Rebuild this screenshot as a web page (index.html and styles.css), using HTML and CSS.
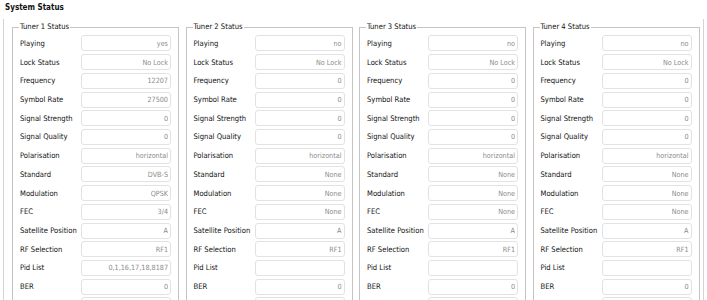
FILE: index.html
```html
<!DOCTYPE HTML>
<html>
	<head>
		<title>System Status</title>
		<meta name="viewport" content="width=device-width, initial-scale=1.0">
		<link rel="stylesheet" href="styles.css">
	</head>
	<body>
	<h1>System Status</h1>
	<div id="status-area">
		<fieldset class="tuner">
			<legend>Tuner 1 Status</legend>
			<label>Playing</label><input type="text" readonly value="yes">
			<label>Lock Status</label><input type="text" readonly value="No Lock">
			<label>Frequency</label><input type="text" readonly value="12207">
			<label>Symbol Rate</label><input type="text" readonly value="27500">
			<label>Signal Strength</label><input type="text" readonly value="0">
			<label>Signal Quality</label><input type="text" readonly value="0">
			<label>Polarisation</label><input type="text" readonly value="horizontal">
			<label>Standard</label><input type="text" readonly value="DVB-S">
			<label>Modulation</label><input type="text" readonly value="QPSK">
			<label>FEC</label><input type="text" readonly value="3/4">
			<label>Satellite Position</label><input type="text" readonly value="A">
			<label>RF Selection</label><input type="text" readonly value="RF1">
			<label>Pid List</label><input type="text" readonly value="0,1,16,17,18,8187">
			<label>BER</label><input type="text" readonly value="0">
			<label></label><input type="text" readonly value="">
		</fieldset>
		<fieldset class="tuner">
			<legend>Tuner 2 Status</legend>
			<label>Playing</label><input type="text" readonly value="no">
			<label>Lock Status</label><input type="text" readonly value="No Lock">
			<label>Frequency</label><input type="text" readonly value="0">
			<label>Symbol Rate</label><input type="text" readonly value="0">
			<label>Signal Strength</label><input type="text" readonly value="0">
			<label>Signal Quality</label><input type="text" readonly value="0">
			<label>Polarisation</label><input type="text" readonly value="horizontal">
			<label>Standard</label><input type="text" readonly value="None">
			<label>Modulation</label><input type="text" readonly value="None">
			<label>FEC</label><input type="text" readonly value="None">
			<label>Satellite Position</label><input type="text" readonly value="A">
			<label>RF Selection</label><input type="text" readonly value="RF1">
			<label>Pid List</label><input type="text" readonly value="">
			<label>BER</label><input type="text" readonly value="0">
			<label></label><input type="text" readonly value="">
		</fieldset>
		<fieldset class="tuner">
			<legend>Tuner 3 Status</legend>
			<label>Playing</label><input type="text" readonly value="no">
			<label>Lock Status</label><input type="text" readonly value="No Lock">
			<label>Frequency</label><input type="text" readonly value="0">
			<label>Symbol Rate</label><input type="text" readonly value="0">
			<label>Signal Strength</label><input type="text" readonly value="0">
			<label>Signal Quality</label><input type="text" readonly value="0">
			<label>Polarisation</label><input type="text" readonly value="horizontal">
			<label>Standard</label><input type="text" readonly value="None">
			<label>Modulation</label><input type="text" readonly value="None">
			<label>FEC</label><input type="text" readonly value="None">
			<label>Satellite Position</label><input type="text" readonly value="A">
			<label>RF Selection</label><input type="text" readonly value="RF1">
			<label>Pid List</label><input type="text" readonly value="">
			<label>BER</label><input type="text" readonly value="0">
			<label></label><input type="text" readonly value="">
		</fieldset>
		<fieldset class="tuner">
			<legend>Tuner 4 Status</legend>
			<label>Playing</label><input type="text" readonly value="no">
			<label>Lock Status</label><input type="text" readonly value="No Lock">
			<label>Frequency</label><input type="text" readonly value="0">
			<label>Symbol Rate</label><input type="text" readonly value="0">
			<label>Signal Strength</label><input type="text" readonly value="0">
			<label>Signal Quality</label><input type="text" readonly value="0">
			<label>Polarisation</label><input type="text" readonly value="horizontal">
			<label>Standard</label><input type="text" readonly value="None">
			<label>Modulation</label><input type="text" readonly value="None">
			<label>FEC</label><input type="text" readonly value="None">
			<label>Satellite Position</label><input type="text" readonly value="A">
			<label>RF Selection</label><input type="text" readonly value="RF1">
			<label>Pid List</label><input type="text" readonly value="">
			<label>BER</label><input type="text" readonly value="0">
			<label></label><input type="text" readonly value="">
		</fieldset>
	</div>
	</body>
</html>
```

FILE: styles.css
```css
body{
	margin: 0;
	padding: 0 3px;
	font-family: "DejaVu Sans Condensed", "DejaVu Sans", sans-serif;
	font-size: 7.6px;
	color: #111;
	background: #fff;
	overflow: hidden;
	height: 300px;
}

h1{
	font-size: 8px;
	font-weight: bold;
	margin: 0;
	padding: 3px 2px 0 2px;
	height: 16px;
	line-height: 10px;
}

#status-area{
	display: flex;
	gap: 6.5px;
	padding: 3px 0 0 8px;
	border-left: 1px solid #d4d4d4;
	border-right: 1px solid #d4d4d4;
	height: 300px;
}

.tuner{
	display: grid;
	grid-template-columns: 61px 90px;
	grid-auto-rows: 18.72px;
	align-items: center;
	align-content: start;
	width: 167px;
	box-sizing: border-box;
	margin: 0;
	padding: 2px 6px 0 7px;
	border: 1px solid #c4c4c4;
	min-width: 0;
}

.tuner legend{
	padding: 0 1px;
	margin-left: -1px;
	line-height: 10px;
}

.tuner label{
	white-space: nowrap;
}

.tuner input{
	font-family: "DejaVu Sans Condensed", "DejaVu Sans", sans-serif;
	font-size: 7.2px;
	color: #8a8a8a;
	text-align: right;
	height: 16px;
	width: 90px;
	box-sizing: border-box;
	border: 1px solid #e2e2e2;
	border-radius: 3px;
	padding: 0 2px;
	margin: 0;
	background: #fff;
	outline: none;
}
```
